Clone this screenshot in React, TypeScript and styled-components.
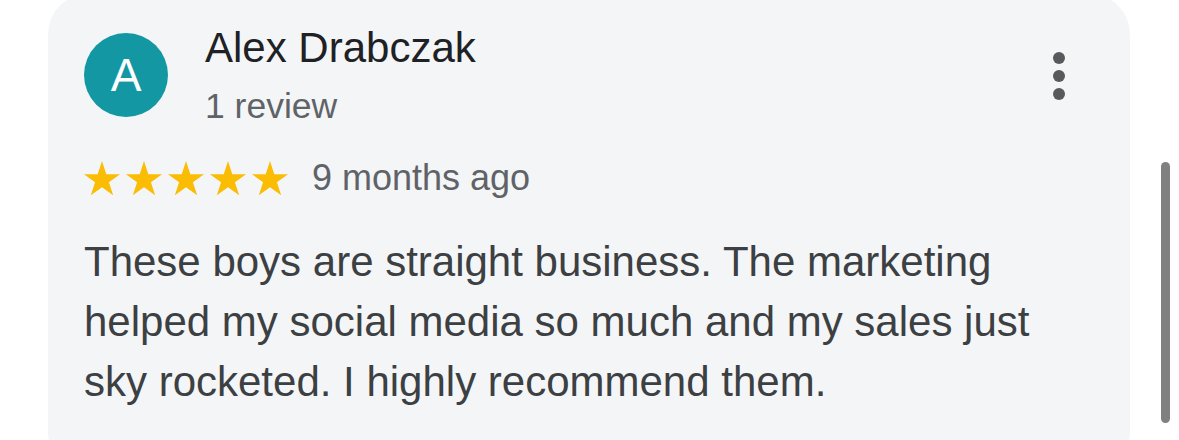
import styled, { createGlobalStyle } from "styled-components";

const GlobalStyle = createGlobalStyle`
  html, body {
    margin: 0;
    padding: 0;
    background: #ffffff;
    overflow: hidden;
  }
  body {
    font-family: "Liberation Sans", Arial, sans-serif;
  }
`;

const STAR_POINTS =
  "18,0 22.27,13.13 36.07,13.13 24.9,21.24 29.17,34.37 18,26.26 6.83,34.37 11.1,21.24 -0.07,13.13 13.73,13.13";

export default function App() {
  const review = {
    initial: "A",
    name: "Alex Drabczak",
    count: "1 review",
    rating: 5,
    when: "9 months ago",
    text: "These boys are straight business. The marketing helped my social media so much and my sales just sky rocketed. I highly recommend them.",
  };

  return (
    <Page>
      <GlobalStyle />
      <Card>
        <Header>
          <Avatar>{review.initial}</Avatar>
          <Who>
            <Name>{review.name}</Name>
            <Count>{review.count}</Count>
          </Who>
          <MoreButton aria-label="More">
            <Dot />
            <Dot />
            <Dot />
          </MoreButton>
        </Header>
        <RatingRow>
          <Stars>
            {Array.from({ length: review.rating }).map((_, i) => (
              <svg key={i} width="36" height="35" viewBox="0 0 36 35">
                <polygon points={STAR_POINTS} fill="#fbbc04" />
              </svg>
            ))}
          </Stars>
          <When>{review.when}</When>
        </RatingRow>
        <Body>{review.text}</Body>
      </Card>
      <Scrollbar />
    </Page>
  );
}

const Page = styled.div`
  position: relative;
  width: 1179px;
  height: 440px;
  padding-left: 48px;
  box-sizing: border-box;
  overflow: hidden;
`;

const Card = styled.div`
  width: 1082px;
  margin-top: -6px;
  padding: 30px 36px 60px 36px;
  box-sizing: border-box;
  background: #f4f5f7;
  border-radius: 40px;
`;

const Header = styled.div`
  display: flex;
  align-items: flex-start;
`;

const Avatar = styled.div`
  flex: none;
  width: 84px;
  height: 84px;
  margin-top: 9px;
  border-radius: 50%;
  background: #1297a3;
  color: #ffffff;
  font-size: 46px;
  line-height: 84px;
  text-align: center;
`;

const Who = styled.div`
  display: flex;
  flex-direction: column;
  margin-left: 37px;
`;

const Name = styled.div`
  font-size: 42px;
  line-height: 48px;
  color: #202124;
`;

const Count = styled.div`
  margin-top: 12px;
  font-size: 35.5px;
  line-height: 44px;
  color: #5f6368;
`;

const MoreButton = styled.div`
  display: flex;
  flex-direction: column;
  gap: 6px;
  margin: 28px 29px 0 auto;
`;

const Dot = styled.span`
  width: 12px;
  height: 12px;
  border-radius: 50%;
  background: #58595c;
`;

const RatingRow = styled.div`
  display: flex;
  align-items: center;
  margin-top: 28px;
`;

const Stars = styled.div`
  display: flex;
  gap: 6px;
  margin-right: 24px;

  svg {
    display: block;
    overflow: visible;
  }
`;

const When = styled.div`
  font-size: 36px;
  line-height: 44px;
  color: #5f6368;
`;

const Body = styled.p`
  margin: 32px 0 0 0;
  font-size: 42px;
  line-height: 60px;
  color: #3c4043;
`;

const Scrollbar = styled.div`
  position: absolute;
  left: 1161px;
  top: 162px;
  width: 9px;
  height: 261px;
  border-radius: 5px;
  background: #808080;
`;
